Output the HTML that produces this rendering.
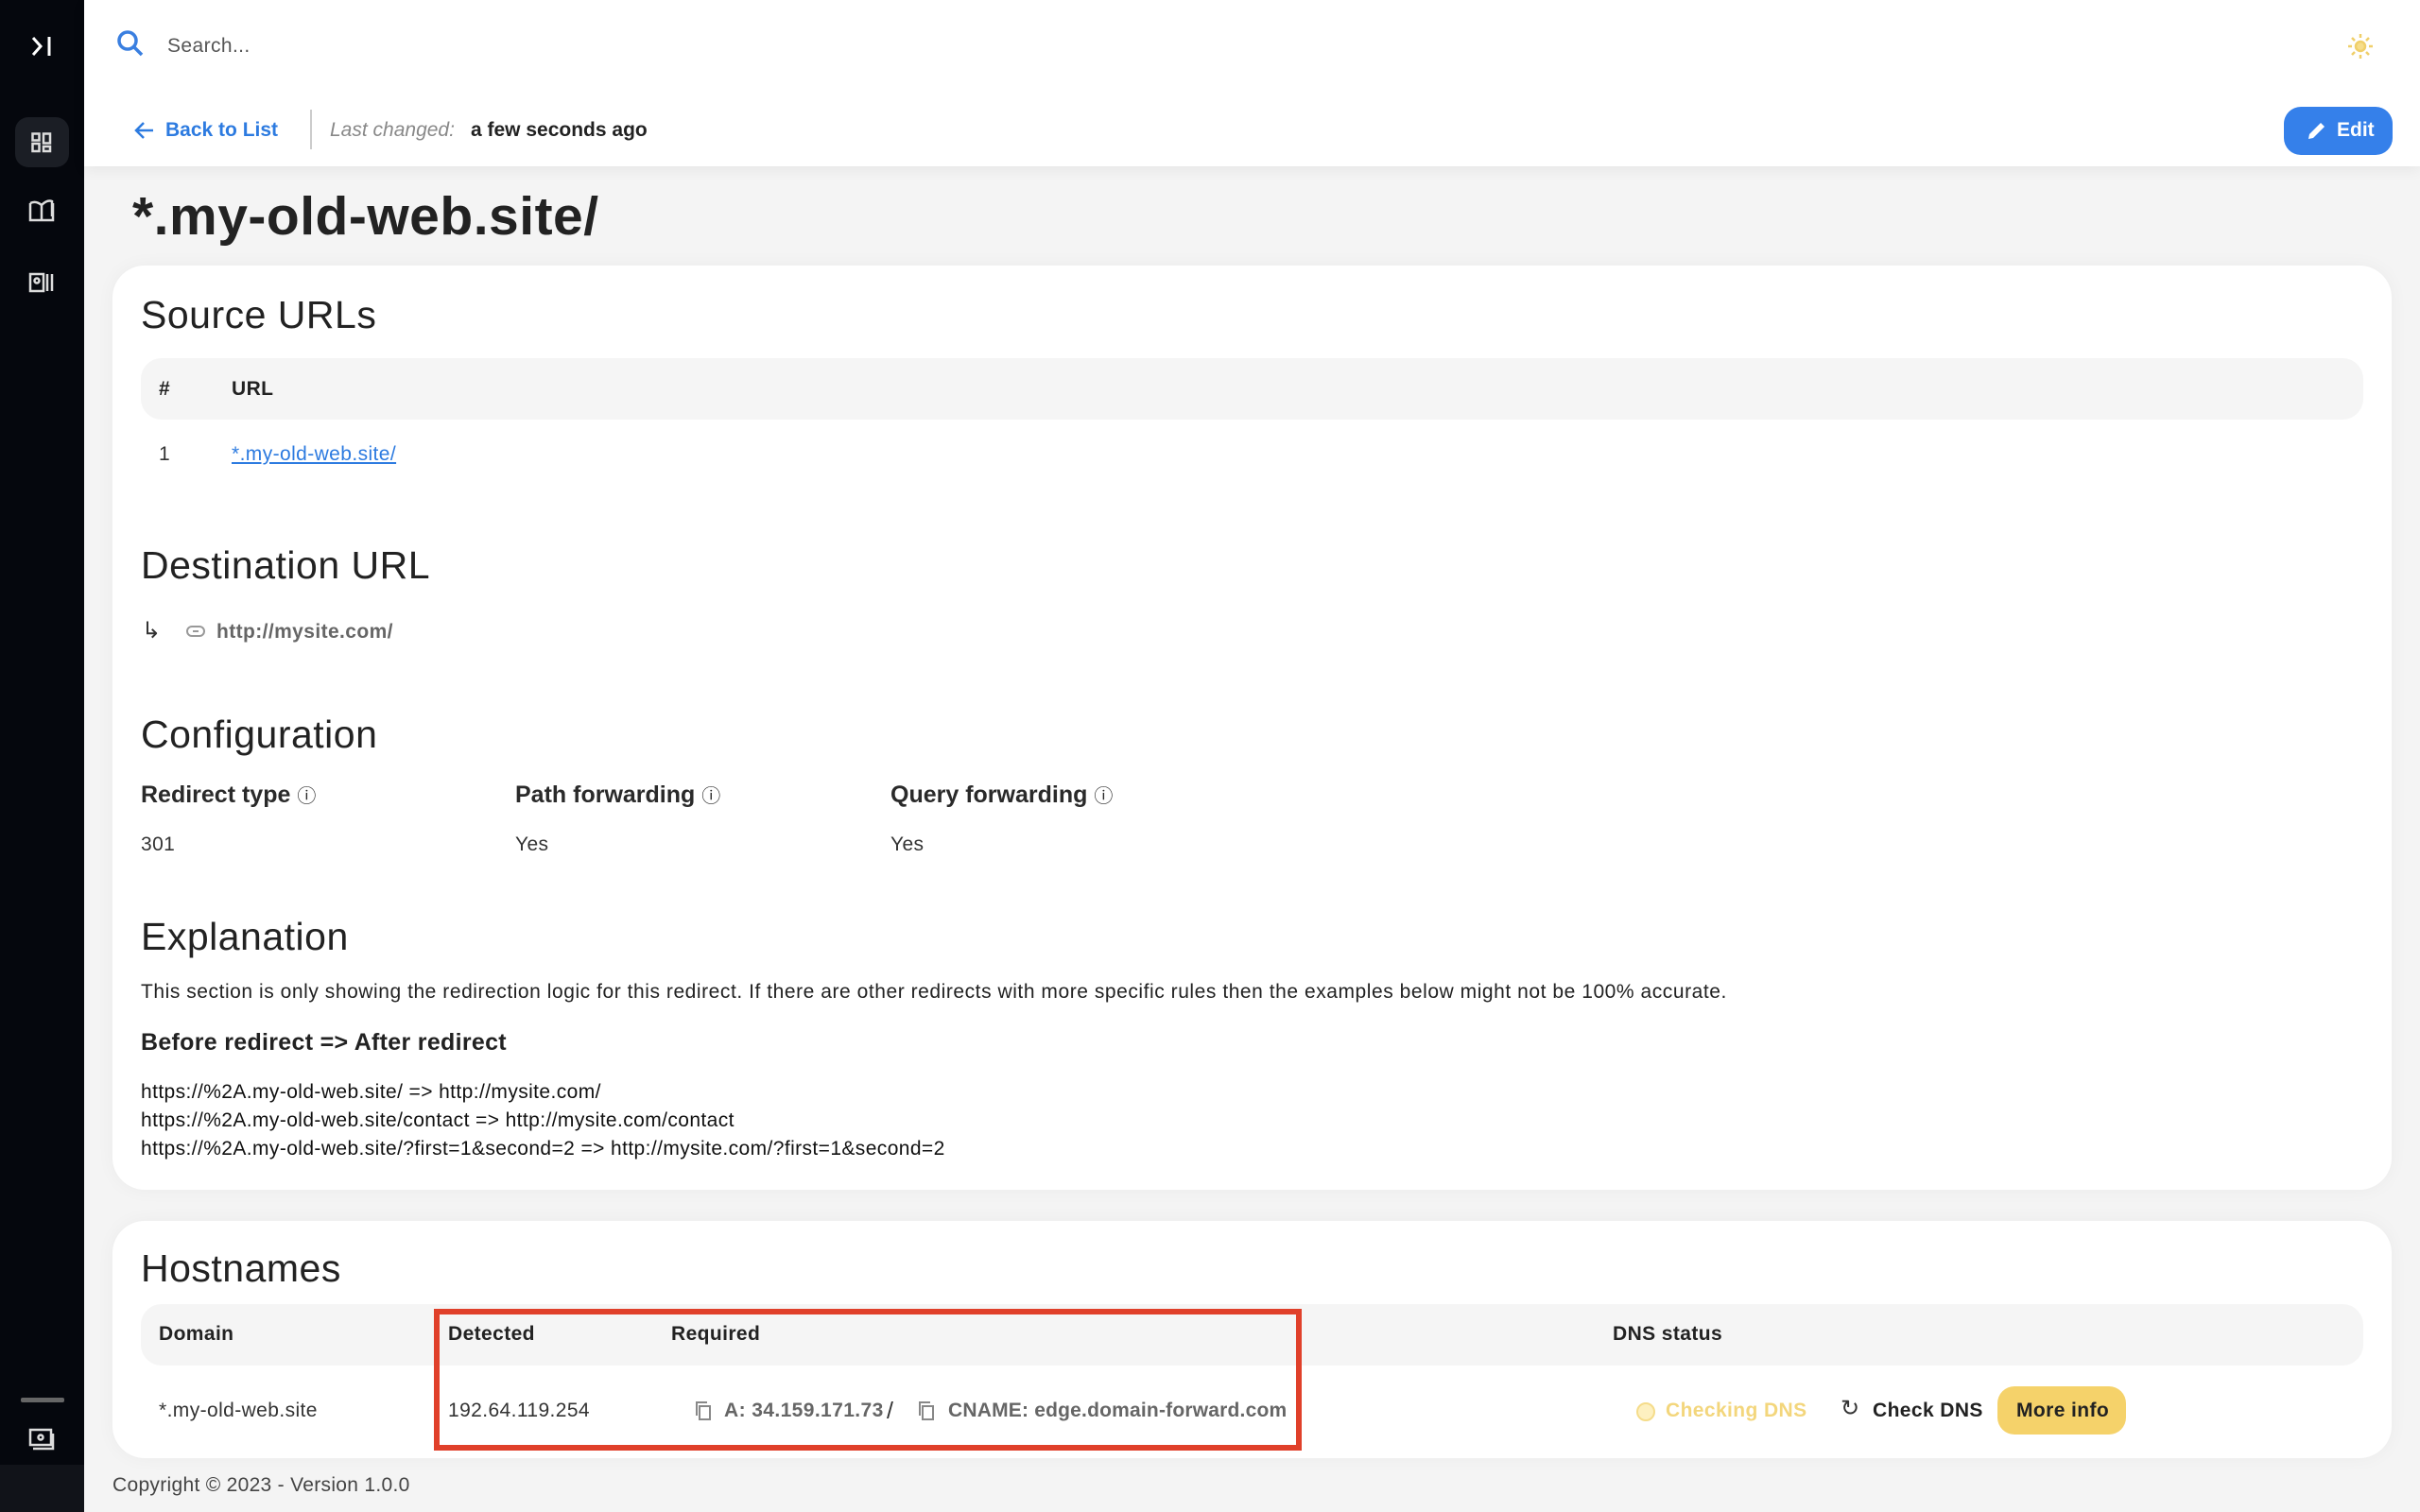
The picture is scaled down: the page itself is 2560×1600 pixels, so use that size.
<!DOCTYPE html>
<html><head><meta charset="utf-8"><style>
*{box-sizing:border-box;margin:0;padding:0}
body{width:2560px;height:1600px;position:relative;overflow:hidden;background:#f4f4f4;font-family:"Liberation Sans",sans-serif;color:#2a2a2a}
.a{position:absolute;white-space:nowrap}
.side{left:0;top:0;width:89px;height:1600px;background:#05070d}
.top{left:89px;top:0;width:2471px;height:176px;background:#fff;box-shadow:0 4px 14px rgba(0,0,0,.06)}
.card{position:absolute;background:#fff;border-radius:34px;box-shadow:0 0 20px rgba(0,0,0,.04)}
h2{position:absolute;font-weight:400;font-size:41px;color:#222;white-space:nowrap;letter-spacing:0.5px}
.th{position:absolute;background:#f5f5f5;border-radius:22px}
.b{font-weight:700}
.t{font-size:21px;color:#333;letter-spacing:0.4px}
</style></head><body>
<div class="a side"></div>
<svg class="a" style="left:30px;top:36px" width="28" height="26" viewBox="0 0 28 26" fill="none" stroke="#fff" stroke-width="3"><path d="M5 4l8 9-8 9"/><path d="M22 3v20"/></svg>
<div class="a" style="left:16px;top:124px;width:57px;height:53px;background:#1b1e25;border-radius:14px"></div>
<svg class="a" style="left:33px;top:140px" width="22" height="22" viewBox="0 0 22 22" fill="none" stroke="#ddd" stroke-width="2.5"><rect x="1.5" y="1.5" width="7" height="7"/><rect x="13" y="1.5" width="7" height="10"/><rect x="1.5" y="12" width="7" height="8"/><rect x="13" y="15" width="7" height="5"/></svg>
<svg class="a" style="left:30px;top:210px" width="28" height="26" viewBox="0 0 28 26" fill="none" stroke="#ddd" stroke-width="2.5"><path d="M2 5v18h24V5"/><path d="M2 5q6-3 12 2v16M14 7q6-6 11-4v16"/></svg>
<svg class="a" style="left:30px;top:288px" width="28" height="22" viewBox="0 0 28 22" fill="none" stroke="#ddd" stroke-width="2.5"><rect x="2" y="2" width="14" height="18"/><circle cx="9" cy="9" r="2.5"/><path d="M20 2v18M25 2v18"/></svg>
<div class="a" style="left:22px;top:1479px;width:46px;height:5px;background:#666;border-radius:2px"></div>
<svg class="a" style="left:30px;top:1510px" width="28" height="26" viewBox="0 0 28 26" fill="none" stroke="#ddd" stroke-width="2.5"><rect x="2" y="3" width="22" height="16"/><path d="M5 23h21V7"/><circle cx="13" cy="11" r="2.5"/></svg>
<div class="a" style="left:0;top:1550px;width:89px;height:50px;background:#111319"></div>

<div class="a top"></div>
<svg class="a" style="left:122px;top:30px" width="32" height="32" viewBox="0 0 32 32" fill="none" stroke="#3a7fe0" stroke-width="3.5"><circle cx="13" cy="13" r="9"/><path d="M20 20l8 8"/></svg>
<div class="a" style="left:177px;top:37px;font-size:21px;color:#555;letter-spacing:0.4px">Search...</div>
<svg class="a" style="left:2482px;top:34px" width="30" height="30" viewBox="0 0 30 30" fill="none" stroke="#f0cf6a" stroke-width="2.5"><circle cx="15" cy="15" r="5" fill="#f6dd8a"/><path d="M15 2v4M15 24v4M2 15h4M24 15h4M6 6l3 3M21 21l3 3M6 24l3-3M21 9l3-3"/></svg>
<svg class="a" style="left:142px;top:127px" width="22" height="22" viewBox="0 0 22 22" fill="none" stroke="#2d7be0" stroke-width="2.5"><path d="M20 11H3M10 3l-8 8 8 8"/></svg>
<div class="a b" style="left:175px;top:126px;font-size:21px;color:#2d7be0">Back to List</div>
<div class="a" style="left:328px;top:116px;width:2px;height:42px;background:#ccc"></div>
<div class="a" style="left:349px;top:126px;font-size:21px;color:#888;font-style:italic">Last changed:</div>
<div class="a b" style="left:498px;top:126px;font-size:21px;color:#222">a few seconds ago</div>
<div class="a" style="left:2416px;top:113px;width:115px;height:51px;background:#3580ea;border-radius:18px"></div>
<svg class="a" style="left:2440px;top:127px" width="22" height="22" viewBox="0 0 22 22" fill="#fff"><path d="M2 20l1-5 12-12 4 4-12 12z"/></svg>
<div class="a b" style="left:2472px;top:126px;font-size:21px;color:#fff">Edit</div>

<div class="a b" style="left:140px;top:196px;font-size:57px;color:#222;letter-spacing:0.5px">*.my-old-web.site/</div>

<div class="card" style="left:119px;top:281px;width:2411px;height:978px"></div>
<h2 style="left:149px;top:310px">Source URLs</h2>
<div class="th" style="left:149px;top:379px;width:2351px;height:65px"></div>
<div class="a b t" style="left:168px;top:400px;color:#222">#</div>
<div class="a b t" style="left:245px;top:400px;color:#222">URL</div>
<div class="a t" style="left:168px;top:469px">1</div>
<div class="a t" style="left:245px;top:469px;color:#2d7be0;text-decoration:underline">*.my-old-web.site/</div>

<h2 style="left:149px;top:575px">Destination URL</h2>
<div class="a" style="left:150px;top:653px;font-size:24px;color:#333">↳</div>
<svg class="a" style="left:196px;top:660px" width="22" height="16" viewBox="0 0 22 16" fill="none" stroke="#999" stroke-width="2"><rect x="2" y="3" width="18" height="10" rx="5"/><path d="M8 8h6"/></svg>
<div class="a b t" style="left:229px;top:657px;color:#666">http://mysite.com/</div>

<h2 style="left:149px;top:754px">Configuration</h2>
<div class="a b" style="left:149px;top:826px;font-size:25px">Redirect type <span style="font-weight:400;font-size:20px">ⓘ</span></div>
<div class="a b" style="left:545px;top:826px;font-size:25px">Path forwarding <span style="font-weight:400;font-size:20px">ⓘ</span></div>
<div class="a b" style="left:942px;top:826px;font-size:25px">Query forwarding <span style="font-weight:400;font-size:20px">ⓘ</span></div>
<div class="a t" style="left:149px;top:882px">301</div>
<div class="a t" style="left:545px;top:882px">Yes</div>
<div class="a t" style="left:942px;top:882px">Yes</div>

<h2 style="left:149px;top:968px">Explanation</h2>
<div class="a t" style="left:149px;top:1038px;color:#222;letter-spacing:0.55px">This section is only showing the redirection logic for this redirect. If there are other redirects with more specific rules then the examples below might not be 100% accurate.</div>
<div class="a b" style="left:149px;top:1089px;font-size:25px;color:#222;letter-spacing:0.3px">Before redirect =&gt; After redirect</div>
<div class="a t" style="left:149px;top:1144px;color:#111">https://%2A.my-old-web.site/ =&gt; http://mysite.com/</div>
<div class="a t" style="left:149px;top:1174px;color:#111">https://%2A.my-old-web.site/contact =&gt; http://mysite.com/contact</div>
<div class="a t" style="left:149px;top:1204px;color:#111">https://%2A.my-old-web.site/?first=1&amp;second=2 =&gt; http://mysite.com/?first=1&amp;second=2</div>

<div class="card" style="left:119px;top:1292px;width:2411px;height:251px"></div>
<h2 style="left:149px;top:1319px">Hostnames</h2>
<div class="th" style="left:149px;top:1380px;width:2351px;height:65px"></div>
<div class="a b t" style="left:168px;top:1400px;color:#222">Domain</div>
<div class="a b t" style="left:474px;top:1400px;color:#222">Detected</div>
<div class="a b t" style="left:710px;top:1400px;color:#222">Required</div>
<div class="a b t" style="left:1706px;top:1400px;color:#222">DNS status</div>
<div class="a t" style="left:168px;top:1481px">*.my-old-web.site</div>
<div class="a t" style="left:474px;top:1481px">192.64.119.254</div>
<svg class="a" style="left:734px;top:1482px" width="20" height="22" viewBox="0 0 20 22" fill="none" stroke="#888" stroke-width="2"><rect x="6" y="6" width="11" height="14"/><path d="M3 16V2h11"/></svg>
<div class="a b t" style="left:766px;top:1481px;color:#666">A: 34.159.171.73</div>
<div class="a t" style="left:938px;top:1479px;font-size:25px">/</div>
<svg class="a" style="left:970px;top:1482px" width="20" height="22" viewBox="0 0 20 22" fill="none" stroke="#888" stroke-width="2"><rect x="6" y="6" width="11" height="14"/><path d="M3 16V2h11"/></svg>
<div class="a b t" style="left:1003px;top:1481px;color:#666;letter-spacing:0.2px">CNAME: edge.domain-forward.com</div>
<div class="a" style="left:459px;top:1385px;width:918px;height:150px;border:6px solid #e0402a"></div>
<div class="a" style="left:1731px;top:1484px;width:20px;height:20px;border-radius:50%;background:#fdf0c0;border:2px solid #f5dc8a"></div>
<div class="a b t" style="left:1762px;top:1481px;color:#f3d67c">Checking DNS</div>
<div class="a" style="left:1947px;top:1476px;font-size:24px;color:#333">↻</div>
<div class="a b t" style="left:1981px;top:1481px;color:#222">Check DNS</div>
<div class="a" style="left:2113px;top:1467px;width:136px;height:51px;background:#f5d26a;border-radius:18px"></div>
<div class="a b t" style="left:2133px;top:1481px;color:#222">More info</div>

<div class="a" style="left:119px;top:1560px;font-size:21px;color:#444;letter-spacing:0.3px">Copyright © 2023 - Version 1.0.0</div>
</body></html>
